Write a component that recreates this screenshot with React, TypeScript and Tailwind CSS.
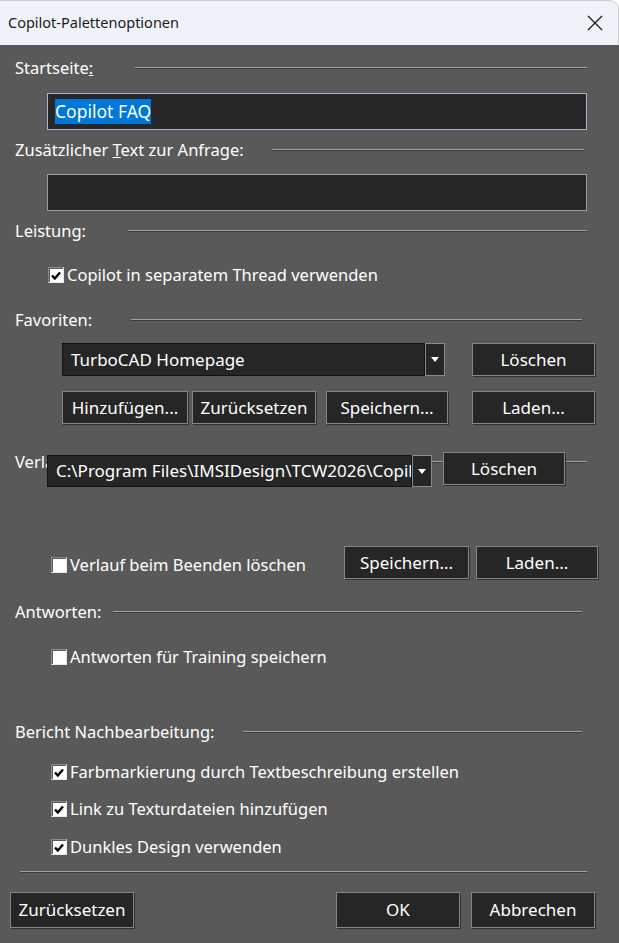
import React from 'react';

const etched = "h-0 border-t border-t-[#a2a2a2] border-b border-b-[#3b3b3b]";

interface HeadingProps {
  label: React.ReactNode;
  labelClass: string;
  lineClass: string;
}

const Heading: React.FC<HeadingProps> = ({ label, labelClass, lineClass }) => (
  <div className="flex h-6 items-center pl-[15px]">
    <span className={labelClass}>{label}</span>
    <div className={etched + " flex-1 " + lineClass} />
  </div>
);

const Btn: React.FC<{ label: string; className: string }> = ({ label, className }) => (
  <button
    className={
      "flex items-center justify-center whitespace-nowrap border border-[#858585] bg-[#262626] text-[17px] text-white shadow-[1px_1px_0_#303030] " +
      className
    }
  >
    {label}
  </button>
);

const Check: React.FC<{ checked?: boolean }> = ({ checked }) => (
  <span className="flex h-4 w-4 shrink-0 items-center justify-center border border-t-[#8a8a8a] border-l-[#8a8a8a] border-b-[#e8e8e8] border-r-[#e8e8e8] bg-white shadow-[inset_1px_1px_0_#5a5a5a]">
    {checked && (
      <svg width="10" height="9" viewBox="0 0 10 9">
        <path d="M1 4.5 L3.8 7.5 L9 1.5" fill="none" stroke="#000" strokeWidth="2.4" />
      </svg>
    )}
  </span>
);

const CheckRow: React.FC<{ label: string; checked?: boolean; className: string }> = ({ label, checked, className }) => (
  <div className={"flex h-6 items-center gap-[3px] " + className}>
    <Check checked={checked} />
    <span className="whitespace-nowrap">{label}</span>
  </div>
);

const Combo: React.FC<{ value: string; className: string }> = ({ value, className }) => (
  <div className={"flex bg-[#262626] text-[17px] " + className}>
    <div className="flex min-w-0 flex-1 items-center overflow-hidden whitespace-nowrap border border-[#111] pl-2">
      {value}
    </div>
    <div className="flex w-5 shrink-0 items-center justify-center border border-[#8a8a8a] bg-[#262626]">
      <svg width="8" height="5" viewBox="0 0 8 5">
        <path d="M0 0 H8 L4 5 Z" fill="#fff" />
      </svg>
    </div>
  </div>
);

export default function App() {
  return (
    <div className="h-[943px] w-[619px] overflow-hidden bg-white font-['Noto_Sans','Liberation_Sans',sans-serif] text-[16.5px] text-white">
      {/* title bar */}
      <div className="flex h-[45px] items-center justify-between rounded-tr-[9px] border-t border-r border-[#c9ccd1] bg-[#eef3f9] pl-2 pr-[15px] text-[#1b1b1b]">
        <span className="text-[14.5px]">Copilot-Palettenoptionen</span>
        <svg width="16" height="16" viewBox="0 0 16 16">
          <path d="M1 1 L15 15 M15 1 L1 15" stroke="#1b1b1b" strokeWidth="1.3" />
        </svg>
      </div>

      <div className="flex h-[898px] flex-col bg-[#595959] pt-[11px]">
        <Heading
          label={<>Startseite<span className="underline">:</span></>}
          labelClass="w-[120px]"
          lineClass="mr-[32px]"
        />
        <div className="ml-[47px] mt-[13px] flex h-[37px] w-[540px] items-center border border-[#a3b7d3] bg-[#272727] px-[7px]">
          <span className="bg-[#0078d7] text-[17.5px] leading-[25px]">Copilot FAQ</span>
        </div>

        <div className="mt-2">
          <Heading
            label={<>Zusätzlicher <span className="underline">T</span>ext zur Anfrage:</>}
            labelClass="w-[257px]"
            lineClass="mr-[35px]"
          />
        </div>
        <div className="ml-[47px] mt-3 h-[37px] w-[540px] border border-[#9c9c9c] bg-[#272727]" />

        <div className="mt-2">
          <Heading label="Leistung:" labelClass="w-[113px]" lineClass="mr-[32px]" />
        </div>
        <CheckRow label="Copilot in separatem Thread verwenden" checked className="ml-[48px] mt-5" />

        <div className="mt-[21px]">
          <Heading label="Favoriten:" labelClass="w-[116px]" lineClass="mr-[37px]" />
        </div>
        <div className="ml-[62px] mt-[11px] flex h-[33px]">
          <Combo value="TurboCAD Homepage" className="w-[383px]" />
          <Btn label="Löschen" className="ml-[27px] w-[123px]" />
        </div>
        <div className="ml-[62px] mt-[15px] flex h-[33px]">
          <Btn label="Hinzufügen..." className="w-[126px]" />
          <Btn label="Zurücksetzen" className="ml-1 w-[124px]" />
          <Btn label="Speichern..." className="ml-[10px] w-[122px]" />
          <Btn label="Laden..." className="ml-6 w-[123px]" />
        </div>

        <div className="relative mt-[26px]">
          <Heading label="Verlauf:" labelClass="w-[60px]" lineClass="mr-[32px]" />
          <div className="absolute left-[47px] top-[5px] flex h-[32px]">
            <Combo value="C:\Program Files\IMSIDesign\TCW2026\Copilot" className="w-[385px]" />
          </div>
          <Btn label="Löschen" className="absolute left-[443px] top-[2px] h-[33px] w-[122px]" />
        </div>

        <div className="mt-[72px] flex h-[33px] items-center">
          <CheckRow label="Verlauf beim Beenden löschen" className="ml-[51px] mt-[5px] w-[293px]" />
          <Btn label="Speichern..." className="h-[33px] w-[125px]" />
          <Btn label="Laden..." className="ml-[7px] h-[33px] w-[122px]" />
        </div>

        <div className="mt-[21px]">
          <Heading label="Antworten:" labelClass="w-[98px]" lineClass="mr-[37px]" />
        </div>
        <CheckRow label="Antworten für Training speichern" className="ml-[51px] mt-[21px]" />

        <div className="mt-[51px]">
          <Heading label="Bericht Nachbearbeitung:" labelClass="w-[228px]" lineClass="mr-[37px]" />
        </div>
        <CheckRow label="Farbmarkierung durch Textbeschreibung erstellen" checked className="ml-[51px] mt-4" />
        <CheckRow label="Link zu Texturdateien hinzufügen" checked className="ml-[51px] mt-[13px]" />
        <CheckRow label="Dunkles Design verwenden" checked className="ml-[51px] mt-[14px]" />

        <div className={etched + " ml-5 mr-[32px] mt-3"} />

        <div className="mt-[19px] flex h-[36px] px-[10px]">
          <Btn label="Zurücksetzen" className="w-[124px]" />
          <Btn label="OK" className="ml-auto w-[124px]" />
          <Btn label="Abbrechen" className="ml-[11px] mr-[14px] w-[124px]" />
        </div>
      </div>
    </div>
  );
}
